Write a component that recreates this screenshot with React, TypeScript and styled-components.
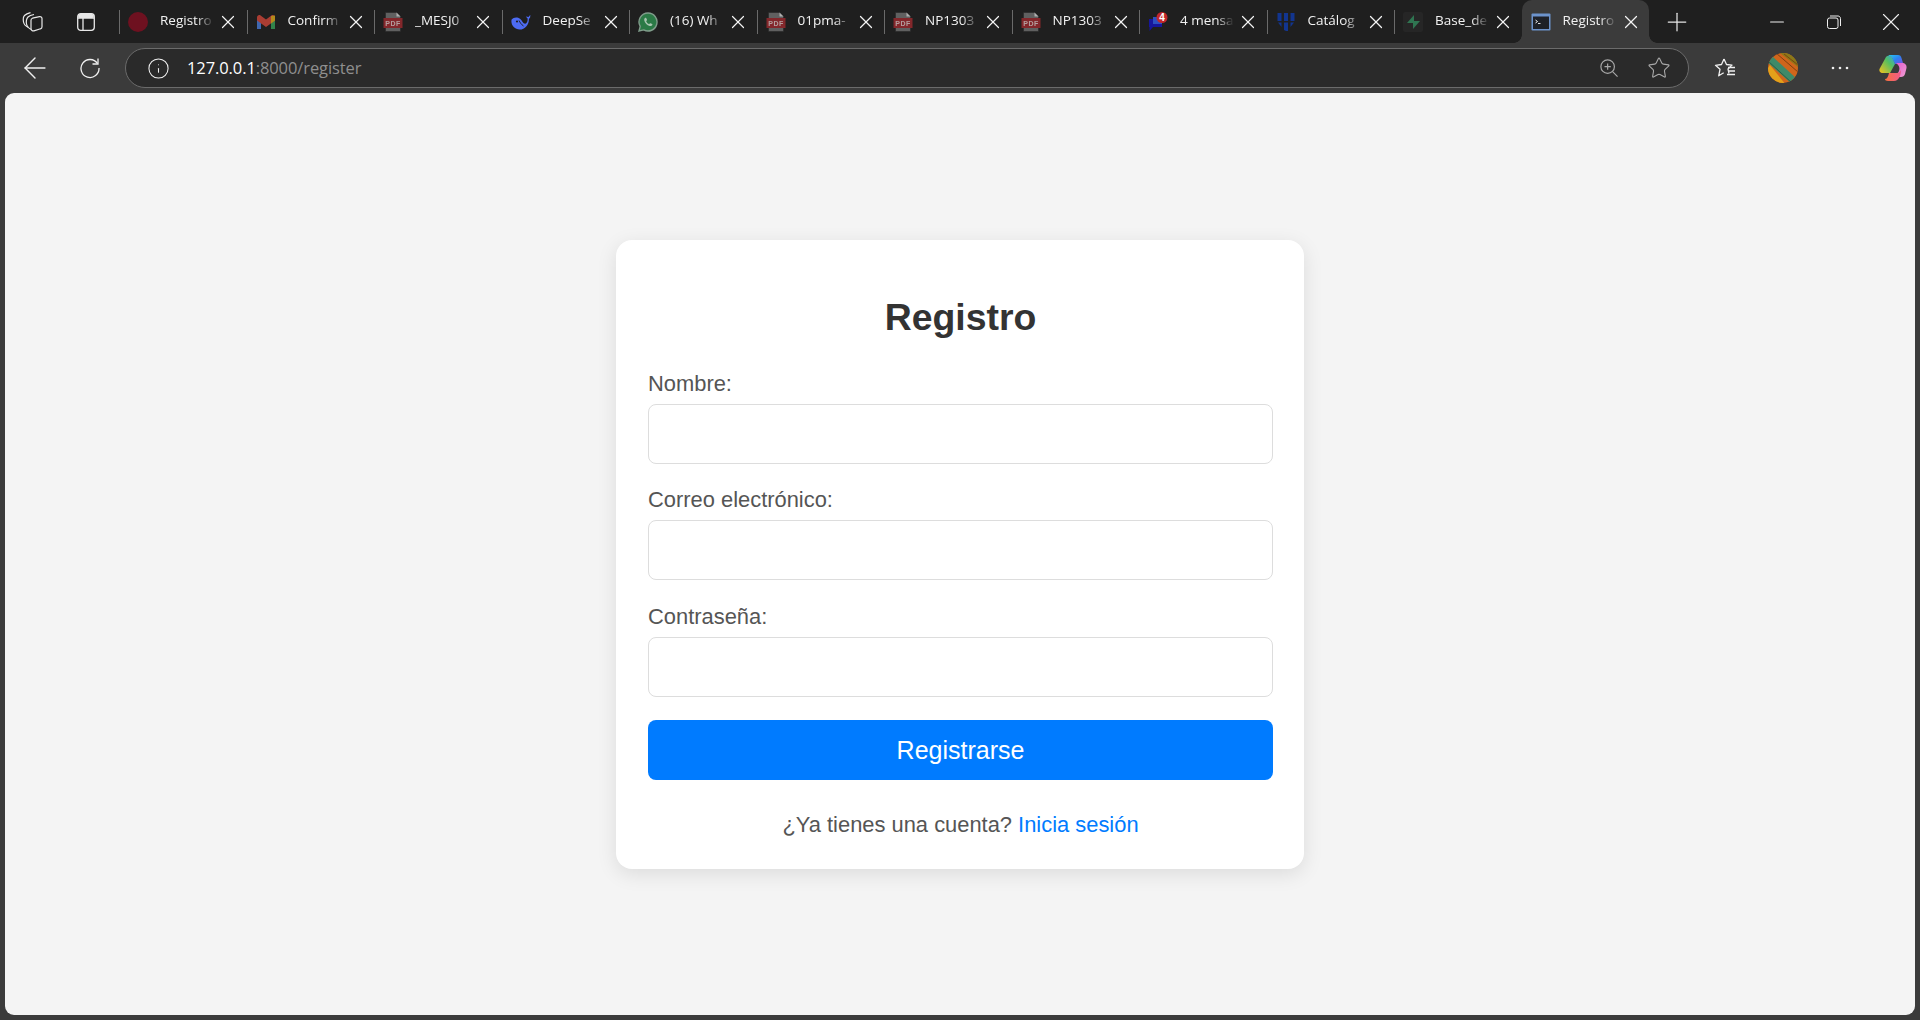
import React from "react";
import styled, { createGlobalStyle } from "styled-components";
import { ArrowLeft, Info, Star, X, Plus, Minus } from "lucide-react";

const Global = createGlobalStyle`
  html, body { margin: 0; padding: 0; height: 100%; background: #3b3b3b; }
  * { box-sizing: border-box; }
  #root { height: 100%; }
`;

const Shell = styled.div`
  height: 1020px;
  display: flex;
  flex-direction: column;
  background: #3b3b3b;
  overflow: hidden;
`;

const TabBar = styled.header`
  height: 43px;
  flex: none;
  display: flex;
  align-items: stretch;
  background: #1f1f1f;
  font-family: "Open Sans", "Noto Sans", sans-serif;
`;

const LeadIcons = styled.div`
  width: 119px;
  flex: none;
  display: flex;
  align-items: center;
  padding-left: 22px;
  gap: 33px;
  color: #e8e8e8;
`;

const Tab = styled.div<{ $active?: boolean; $sep?: boolean }>`
  position: relative;
  width: 127.5px;
  flex: none;
  display: flex;
  align-items: center;
  padding-left: 9px;
  color: #f2f2f2;
  background: ${(p) => (p.$active ? "#3b3b3b" : "transparent")};
  border-radius: ${(p) => (p.$active ? "10px 10px 0 0" : "0")};
  &::before {
    content: "";
    display: ${(p) => (p.$sep ? "block" : "none")};
    position: absolute;
    left: 0;
    top: 10px;
    bottom: 9px;
    width: 1px;
    background: #6a6a6a;
  }
  ${(p) =>
    p.$active
      ? `
    &::after {
      content: "";
      position: absolute;
      left: -8px;
      right: -8px;
      bottom: 0;
      height: 8px;
      pointer-events: none;
      background:
        radial-gradient(circle at 0 0, #1f1f1f 7.5px, #3b3b3b 8px) left bottom / 8px 8px no-repeat,
        radial-gradient(circle at 100% 0, #1f1f1f 7.5px, #3b3b3b 8px) right bottom / 8px 8px no-repeat;
    }`
      : ""}
`;

const TabIconSlot = styled.span`
  width: 20px;
  height: 20px;
  flex: none;
  display: flex;
  align-items: center;
  justify-content: center;
  margin-right: 12px;
`;

const TabTitle = styled.span`
  width: 54px;
  flex: none;
  overflow: hidden;
  white-space: nowrap;
  font-size: 13.5px;
  line-height: 19px;
  margin-top: -2px;
  -webkit-mask-image: linear-gradient(to right, #000 68%, transparent 100%);
  mask-image: linear-gradient(to right, #000 68%, transparent 100%);
`;

const TabClose = styled.span`
  flex: none;
  margin-left: 3px;
  display: flex;
  color: #f4f4f4;
  position: relative;
  z-index: 1;
`;

const NewTab = styled.div`
  width: 55px;
  flex: none;
  display: flex;
  align-items: center;
  justify-content: center;
  color: #e6e6e6;
`;

const WindowControls = styled.div`
  margin-left: auto;
  padding-right: 1px;
  display: flex;
  color: #efefef;
`;

const WindowButton = styled.div`
  width: 57px;
  display: flex;
  align-items: center;
  justify-content: center;
`;

const Toolbar = styled.nav`
  height: 50px;
  flex: none;
  display: flex;
  align-items: center;
  color: #f0f0f0;
  font-family: "Open Sans", "Noto Sans", sans-serif;
`;

const NavButton = styled.div`
  width: 55px;
  flex: none;
  display: flex;
  align-items: center;
  justify-content: center;
`;

const NavGroup = styled.div`
  width: 125px;
  flex: none;
  display: flex;
  padding-left: 7px;
`;

const AddressBar = styled.div`
  width: 1564px;
  height: 40px;
  flex: none;
  display: flex;
  align-items: center;
  border: 1px solid #6b6b6b;
  border-radius: 20px;
  background: #2a2a2a;
  padding: 0 17px 0 21px;
`;

const Url = styled.div`
  margin: -2px 0 0 17px;
  font-size: 16.5px;
  letter-spacing: -0.1px;
  color: #ffffff;
  flex: 1;
  span { color: #8f8f8f; }
`;

const AddressActions = styled.div`
  display: flex;
  align-items: center;
  gap: 29px;
  color: #a8a8a8;
`;

const ToolActions = styled.div`
  flex: 1;
  display: flex;
  align-items: center;
  padding-left: 25px;
`;

const ToolSlot = styled.div<{ $w: number }>`
  width: ${(p) => p.$w}px;
  flex: none;
  display: flex;
  align-items: center;
  justify-content: center;
`;

const Page = styled.main`
  flex: 1;
  margin: 0 5px 5px;
  border-radius: 9px;
  background: #f4f4f4;
  display: flex;
  align-items: center;
  justify-content: center;
  font-family: "Liberation Sans", Arial, sans-serif;
`;

const Card = styled.section`
  width: 688px;
  height: 629px;
  padding: 55px 31px 0 32px;
  background: #ffffff;
  border-radius: 16px;
  box-shadow: 0 5px 20px rgba(0, 0, 0, 0.1);
`;

const Heading = styled.h2`
  margin: 0 0 32px;
  text-align: center;
  font-size: 37.4px;
  line-height: 44px;
  font-weight: 700;
  color: #333333;
`;

const Field = styled.div`
  margin-bottom: 23.5px;
`;

const Label = styled.label`
  display: block;
  font-size: 21.9px;
  line-height: 25px;
  color: #555555;
  margin-bottom: 8px;
`;

const Input = styled.input`
  display: block;
  width: 100%;
  height: 60px;
  border: 1px solid #dddddd;
  border-radius: 8px;
  background: #ffffff;
  outline: none;
`;

const Submit = styled.button`
  display: block;
  width: 100%;
  height: 60px;
  border: none;
  border-radius: 8px;
  background: #007bff;
  color: #ffffff;
  font-family: inherit;
  font-size: 25px;
`;

const Foot = styled.p`
  margin: 32px 0 0;
  text-align: center;
  font-size: 21.9px;
  line-height: 25px;
  color: #555555;
`;

const FootLink = styled.a`
  color: #007bff;
  text-decoration: none;
`;

const DimSvg = styled.svg`
  display: block;
  opacity: 0.75;
`;

const Pdf = () => (
  <DimSvg width="20" height="20" viewBox="0 0 20 20">
    <path d="M2.500 0.500h11l4 4v15h-15z" fill="#767676" stroke="#2a2a2a" strokeWidth="0.6" />
    <path d="M13.500 0.500l4 4h-4z" fill="#e0e0e0" />
    <rect x="0.500" y="6" width="19" height="10" fill="#a52a2f" />
    <text x="10" y="13.500" textAnchor="middle" fontSize="7" fontWeight="700" letterSpacing="0.5" fontFamily="Liberation Sans" fill="#e6c8c8">PDF</text>
  </DimSvg>
);

const Gmail = () => (
  <DimSvg width="20" height="20" viewBox="0 0 20 20">
    <path d="M1 6v11h4V9z" fill="#4a80e0" />
    <path d="M19 6v11h-4V9z" fill="#37a55a" />
    <path d="M1 5.500v3l9 6.500 9-6.500v-3C19 3.500 17 2.500 15.400 3.500L10 7.500 4.600 3.500C3 2.500 1 3.500 1 5.500z" fill="#d8483a" />
    <path d="M15 4 19 3.500v5l-4 3z" fill="#e6ae1a" />
  </DimSvg>
);

const Whale = () => (
  <svg width="20" height="20" viewBox="0 0 20 20" style={{ display: "block" }}>
    <path d="M0.600 7.500C2.500 5.200 6.500 4.800 9 6.800c2.300 1.900 3.300 5.200 5.200 5 1.700-.2 2.600-2.700 2.400-5.300L14.800 4.600l2.700.3 1-1.100.9-.8-.3 2.600-1.200 1.300c.3 5.500-3.800 10.700-9.200 10.700C3.300 17.600-.6 12.600.6 7.500z" fill="#4d6bf2" />
    <circle cx="6" cy="9.500" r="1.100" fill="#1f1f1f" />
    <path d="M8 8.500c1 2 2.400 4.200 4.500 5.500" stroke="#1f1f1f" strokeWidth="0.900" fill="none" />
  </svg>
);

const WhatsApp = () => (
  <svg width="20" height="20" viewBox="0 0 20 20" style={{ display: "block" }}>
    <path d="M10 1a9 9 0 1 1-4.300 16.900L1 19l1.200-4.600A9 9 0 0 1 10 1z" fill="#2b7a46" stroke="#7f9c8a" strokeWidth="1.400" />
    <path d="M7.300 5.800c-.8.500-1.300 1.400-1 2.700.5 2.300 2.900 4.900 5.300 5.500 1.200.3 2.200-.2 2.700-1 .2-.4.200-.7-.1-.9l-1.700-.9c-.3-.1-.5 0-.7.200l-.6.700c-1.300-.4-2.700-1.800-3.100-3.100l.7-.6c.2-.2.300-.4.200-.7L8.200 6c-.2-.3-.5-.4-.9-.2z" fill="#a8c4b0" />
  </svg>
);

const Chat = () => (
  <svg width="20" height="20" viewBox="0 0 20 20" style={{ display: "block" }}>
    <path d="M1 7h13v8H5l-3.500 4V15H1z" fill="#16169c" />
    <rect x="5" y="5" width="9" height="7" fill="#2d4fc0" />
    <circle cx="14" cy="5.500" r="5.500" fill="#c2262b" />
    <text x="14" y="9.200" textAnchor="middle" fontSize="10" fontWeight="700" fontFamily="Liberation Sans" fill="#fff">4</text>
  </svg>
);

const Shield = () => (
  <svg width="18" height="20" viewBox="0 0 18 20" style={{ display: "block" }}>
    <path d="M0.500 1h4v8h-4zM7 1h4v8H7zM13.500 1h4v8h-4zM1 10.500h3.500v4.500zM7 10.500h4V19H9l-2-1zM13.500 10.500H17l-3.500 4.500z" fill="#12358f" />
  </svg>
);

const Bolt = () => (
  <svg width="20" height="20" viewBox="0 0 20 20" style={{ display: "block" }}>
    <rect width="20" height="20" fill="#262626" rx="2" />
    <path d="M11 3 4 11h6v6l7-8h-6z" fill="#2f7551" />
  </svg>
);

const Terminal = () => (
  <svg width="20" height="20" viewBox="0 0 20 20" style={{ display: "block" }}>
    <rect x="0.500" y="1.500" width="19" height="17" rx="1" fill="#6c93cc" />
    <rect x="2" y="4.500" width="16" height="12.500" fill="#1e2128" />
    <path d="M4.500 8l2 1.500-2 1.500" stroke="#f0f0f0" strokeWidth="1" fill="none" />
    <rect x="7" y="11" width="2.500" height="1" fill="#dcdcdc" />
  </svg>
);

const RedDot = () => (
  <svg width="20" height="20" viewBox="0 0 20 20" style={{ display: "block" }}>
    <circle cx="10" cy="10" r="10" fill="#6e1120" />
  </svg>
);

const Workspaces = () => (
  <svg width="22" height="22" viewBox="0 0 22 22" fill="none" stroke="currentColor" strokeWidth="1.200" style={{ display: "block" }}>
    <path d="M6.500 16.500C3 15 2 13.500 1.500 11 1 8 1 6 2.500 4.500 4 3 6 2.200 8.500 1.600" />
    <path d="M9.500 18.500C7 17.500 5 15.500 4.500 13 4 10 4.500 7.500 6 6c1.500-1.400 3.500-2 6-2.500" />
    <path d="M9 9.200c0-1 .6-1.700 1.500-2l7-1.600c1.300-.3 2.500.6 2.500 1.900v8.300c0 1-.6 1.800-1.500 2l-6.500 2c-1.500.4-3-.6-3-2.100z" />
  </svg>
);

const VerticalTabs = () => (
  <svg width="18" height="18" viewBox="0 0 18 18" fill="none" stroke="currentColor" strokeWidth="1.300" style={{ display: "block" }}>
    <rect x="0.700" y="0.700" width="16.600" height="16.600" rx="3" />
    <path d="M1 5h16M6 5v12" />
    <rect x="1" y="1" width="16" height="4" fill="currentColor" stroke="none" rx="2" />
  </svg>
);

const Refresh = () => (
  <svg width="22" height="22" viewBox="0 0 22 22" fill="none" stroke="currentColor" strokeWidth="1.300" style={{ display: "block" }}>
    <path d="M18.500 6.500A9 9 0 1 0 20 11" />
    <path d="M19 1.500v5.500h-5.500" />
  </svg>
);

const ZoomGlass = () => (
  <svg width="18" height="18" viewBox="0 0 20 20" fill="none" stroke="currentColor" strokeWidth="1.300" style={{ display: "block" }}>
    <circle cx="8.500" cy="8.500" r="7.500" />
    <path d="M14 14l5.500 5.500M8.500 5v7M5 8.500h7" />
  </svg>
);

const Favorites = () => (
  <svg width="22" height="22" viewBox="0 0 22 22" fill="none" stroke="currentColor" strokeWidth="1.300" style={{ display: "block" }}>
    <path d="M10 2l2.500 5.500 5.500.6-4 3.900 1 4.500M10 2 7.500 7.500 1.500 8.300l4.500 4-1.300 6.500 5-3" strokeLinejoin="round" />
    <path d="M14 10.500h7M14 14h7M13 17.500h8" />
  </svg>
);

const Avatar = () => (
  <svg width="30" height="30" viewBox="0 0 30 30" style={{ display: "block" }}>
    <defs>
      <clipPath id="av"><circle cx="15" cy="15" r="15" /></clipPath>
    </defs>
    <g clipPath="url(#av)">
      <rect width="30" height="30" fill="#d0651b" />
      <path d="M12 0h18v14z" fill="#8a7a18" />
      <path d="M-2 8 4 3l26 24-5 5z" fill="#3f8a68" />
      <path d="M-2 18 2 12l16 20H4z" fill="#e3a11a" />
      <path d="M8 0l22 19M16 1l14 11" stroke="#7e4012" strokeWidth="1" />
      <path d="M0 8l24 22" stroke="#2e5d44" strokeWidth="1" />
    </g>
  </svg>
);

const Copilot = () => (
  <svg width="28" height="28" viewBox="0 0 28 28" style={{ display: "block" }}>
    <defs>
      <linearGradient id="cpA" x1="0" y1="0" x2="1" y2="1">
        <stop offset="0" stopColor="#27c6f0" />
        <stop offset="0.5" stopColor="#2f7ff0" />
        <stop offset="1" stopColor="#7a4fe0" />
      </linearGradient>
      <linearGradient id="cpB" x1="0" y1="0" x2="1" y2="1">
        <stop offset="0" stopColor="#e25bd0" />
        <stop offset="1" stopColor="#f0a0d0" />
      </linearGradient>
      <linearGradient id="cpC" x1="0" y1="1" x2="1" y2="0">
        <stop offset="0" stopColor="#f7c21c" />
        <stop offset="0.6" stopColor="#55c060" />
        <stop offset="1" stopColor="#2f9ff0" />
      </linearGradient>
      <linearGradient id="cpD" x1="0" y1="0" x2="1" y2="0">
        <stop offset="0" stopColor="#f7703c" />
        <stop offset="1" stopColor="#f05a8c" />
      </linearGradient>
    </defs>
    <path d="M10 1h9c2 0 3 1 3.500 3l1.500 5-8 1-3-6c-.6-1-1.500-1.500-3-1.500z" fill="url(#cpA)" />
    <path d="M7 3c2-2 5-2 6 0l3 7-5 9H4c-3 0-4-2-3.500-4z" fill="url(#cpC)" />
    <path d="M17 9h6c3 0 5 2 4.500 5l-1.500 6c-.5 2-2 3-4 3h-5l3-6c1-3 .5-5-3-8z" fill="url(#cpB)" />
    <path d="M10 19h8c2 0 3-1 4-3 0 5-2 11-7 11H9c-2 0-3-1-3-2 2 0 3-2 4-6z" fill="url(#cpD)" />
  </svg>
);

const tabs: { title: string; icon: React.ReactNode }[] = [
  { title: "Registro", icon: <RedDot /> },
  { title: "Confirm", icon: <Gmail /> },
  { title: "_MESJ0", icon: <Pdf /> },
  { title: "DeepSe", icon: <Whale /> },
  { title: "(16) Wh", icon: <WhatsApp /> },
  { title: "01pma-", icon: <Pdf /> },
  { title: "NP1303", icon: <Pdf /> },
  { title: "NP1303", icon: <Pdf /> },
  { title: "4 mensa", icon: <Chat /> },
  { title: "Catálog", icon: <Shield /> },
  { title: "Base_de", icon: <Bolt /> },
  { title: "Registro", icon: <Terminal /> },
];

export default function App() {
  return (
    <Shell>
      <Global />
      <TabBar>
        <LeadIcons>
          <Workspaces />
          <VerticalTabs />
        </LeadIcons>
        {tabs.map((t, i) => (
          <Tab key={i} $active={i === tabs.length - 1} $sep={i < tabs.length - 1}>
            <TabIconSlot>{t.icon}</TabIconSlot>
            <TabTitle>{t.title}</TabTitle>
            <TabClose><X size={22} strokeWidth={1.3} /></TabClose>
          </Tab>
        ))}
        <NewTab><Plus size={30} strokeWidth={1} /></NewTab>
        <WindowControls>
          <WindowButton><Minus size={22} strokeWidth={1.2} /></WindowButton>
          <WindowButton>
            <svg width="14" height="14" viewBox="0 0 14 14" fill="none" stroke="currentColor" strokeWidth="1">
              <rect x="0.500" y="3" width="10.500" height="10.500" rx="2" />
              <path d="M3 1h8c1.200 0 2.500 1 2.500 2.500V11" />
            </svg>
          </WindowButton>
          <WindowButton><X size={30} strokeWidth={0.9} /></WindowButton>
        </WindowControls>
      </TabBar>
      <Toolbar>
        <NavGroup>
          <NavButton><ArrowLeft size={34} strokeWidth={1} /></NavButton>
          <NavButton><Refresh /></NavButton>
        </NavGroup>
        <AddressBar>
          <Info size={23} strokeWidth={1.1} />
          <Url>127.0.0.1<span>:8000/register</span></Url>
          <AddressActions>
            <ZoomGlass />
            <Star size={24} strokeWidth={1.1} />
          </AddressActions>
        </AddressBar>
        <ToolActions>
          <ToolSlot $w={22}><Favorites /></ToolSlot>
          <ToolSlot $w={94}><Avatar /></ToolSlot>
          <ToolSlot $w={20}>
            <svg width="18" height="4" viewBox="0 0 18 4" fill="currentColor"><circle cx="2" cy="2" r="1.300" /><circle cx="9" cy="2" r="1.300" /><circle cx="16" cy="2" r="1.300" /></svg>
          </ToolSlot>
          <ToolSlot $w={86}><Copilot /></ToolSlot>
        </ToolActions>
      </Toolbar>
      <Page>
        <Card>
          <Heading>Registro</Heading>
          <Field>
            <Label>Nombre:</Label>
            <Input type="text" />
          </Field>
          <Field>
            <Label>Correo electrónico:</Label>
            <Input type="email" />
          </Field>
          <Field>
            <Label>Contraseña:</Label>
            <Input type="password" />
          </Field>
          <Submit>Registrarse</Submit>
          <Foot>¿Ya tienes una cuenta? <FootLink href="#">Inicia sesión</FootLink></Foot>
        </Card>
      </Page>
    </Shell>
  );
}
